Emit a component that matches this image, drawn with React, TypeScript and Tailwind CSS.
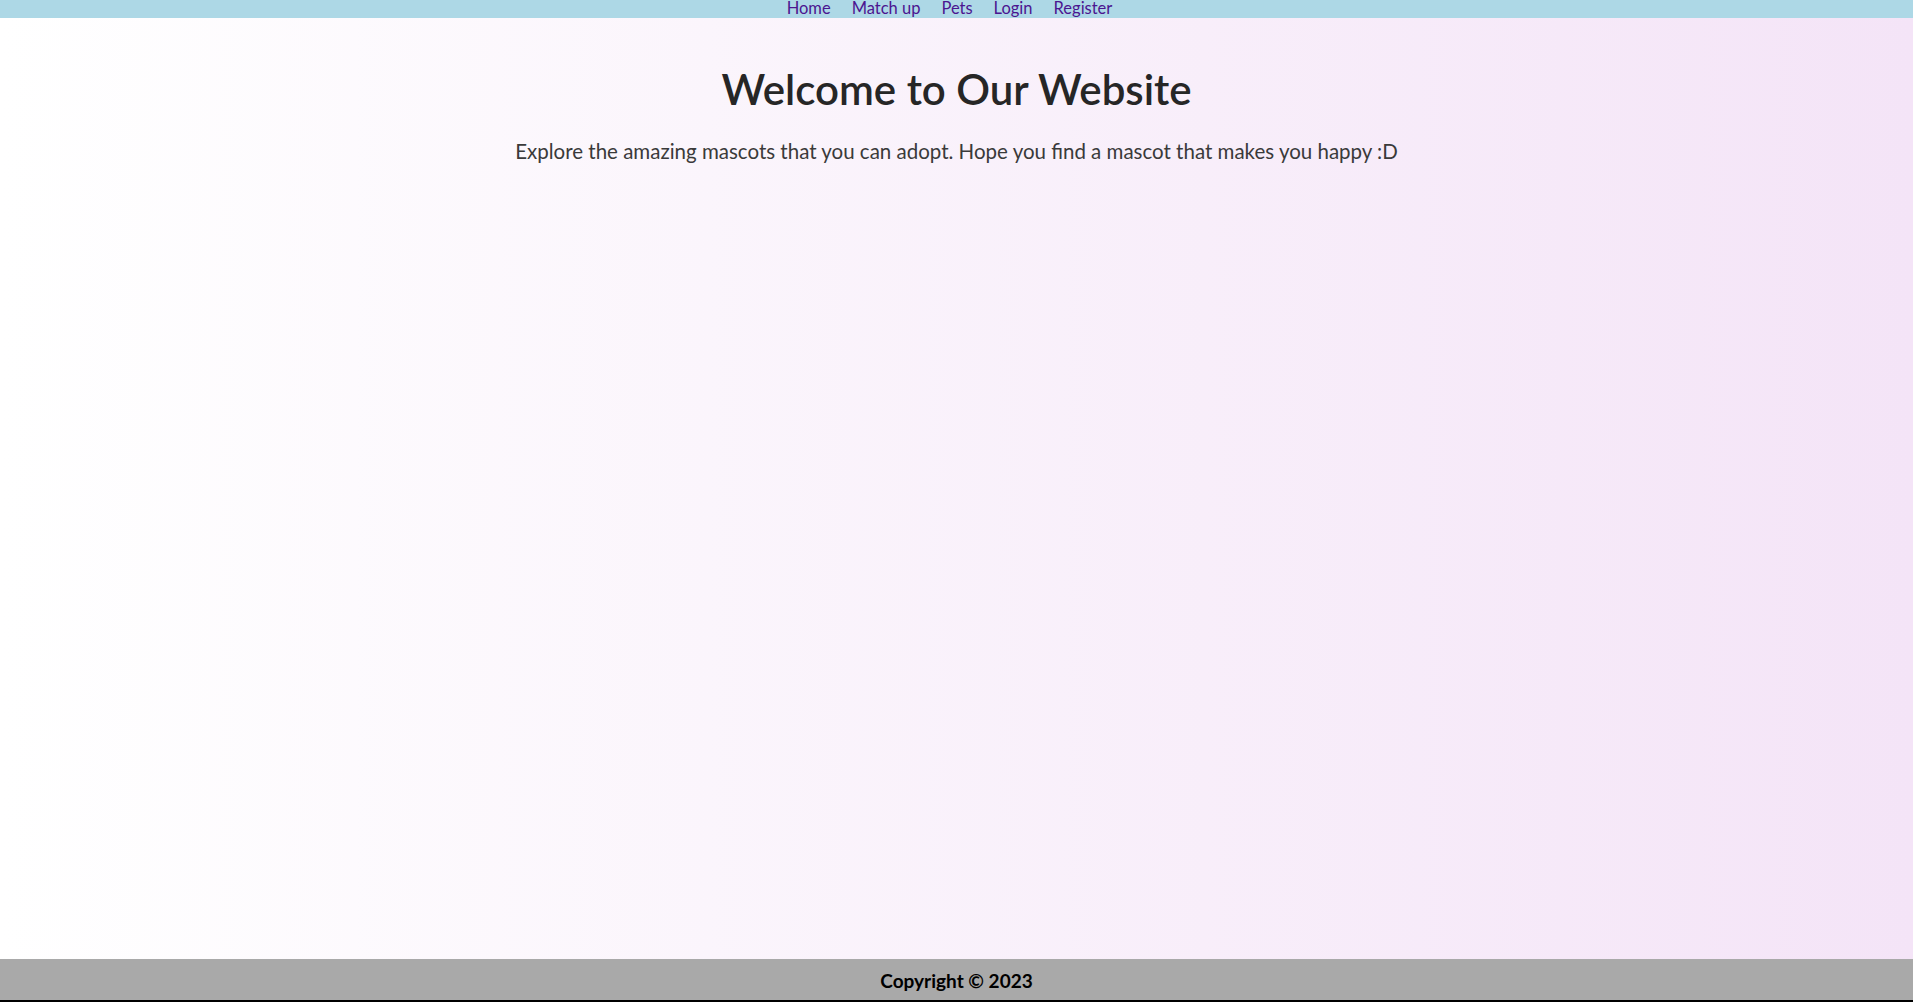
const links = ["Home", "Match up", "Pets", "Login", "Register"]

const App = () => {
    return (
        <div
            className="flex flex-col h-screen bg-[linear-gradient(to_right,#ffffff,#f4e4f7)]"
            style={{ fontFamily: "Lato, 'Open Sans', sans-serif" }}
        >
            <nav className="flex justify-center gap-x-[21px] h-[18px] pr-[14px] bg-[#add8e6] text-[16.5px] leading-[17px] text-[#4b1590]">
                {links.map((link, index) => (
                    <a key={index} href="#">{link}</a>
                ))}
            </nav>

            <main className="flex-1 flex flex-col items-center text-center">
                <h1 className="mt-[46px] text-[42px] leading-[50px] font-semibold text-[#262626]">Welcome to Our Website</h1>
                <p className="mt-[22px] text-[20.5px] text-[#3a3a3a]">
                    Explore the amazing mascots that you can adopt. Hope you find a mascot that makes you happy :D
                </p>
            </main>

            <footer className="h-[43px] pt-[4px] bg-[#a9a9a9] border-b-2 border-black flex items-center justify-center">
                <h2 className="text-[19px] font-bold text-black">Copyright © 2023</h2>
            </footer>
        </div>
    )
}

export default App
